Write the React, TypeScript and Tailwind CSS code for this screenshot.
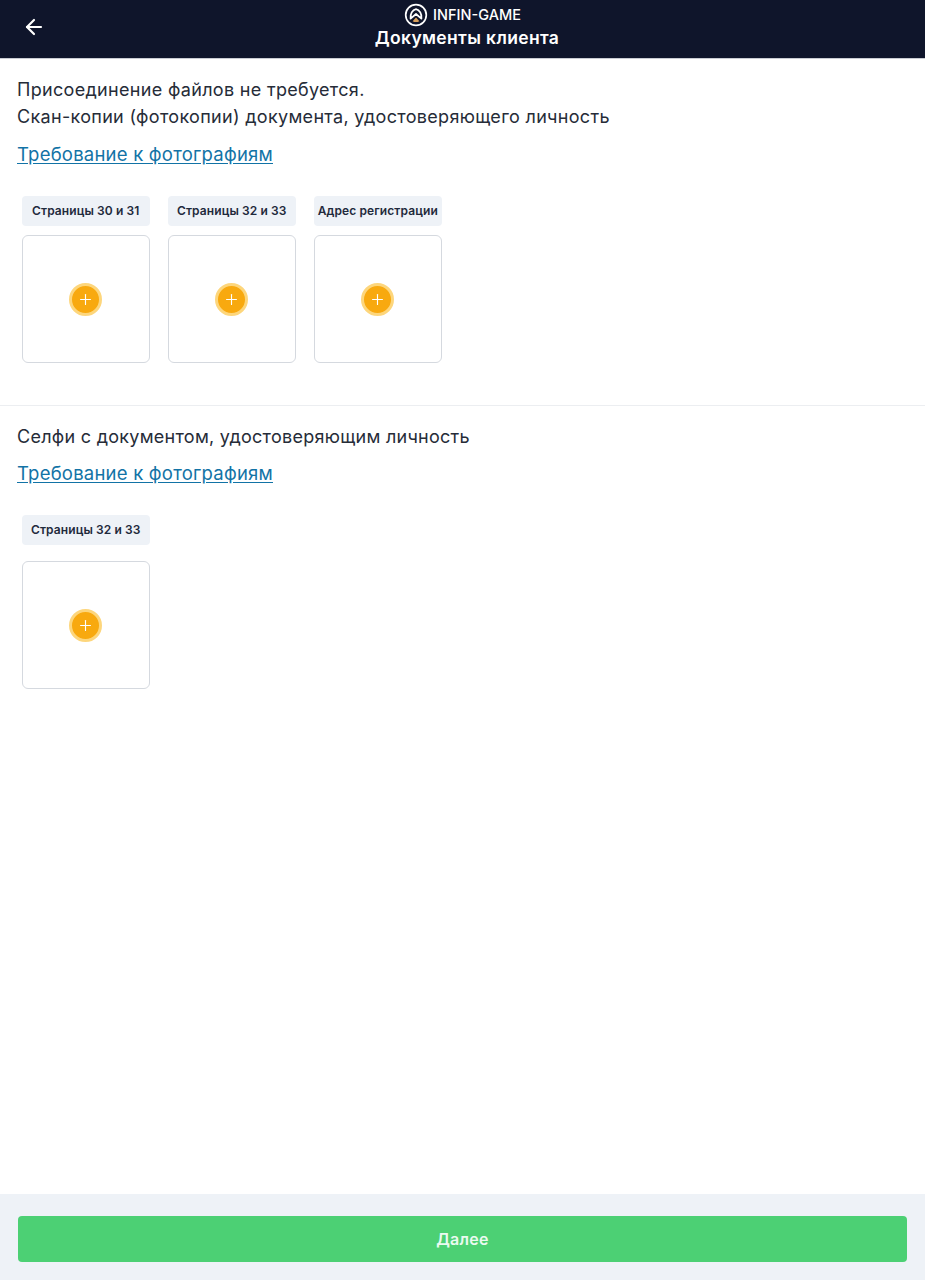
import { ArrowLeft, Plus } from 'lucide-react'

function Logo() {
  return (
    <svg width="24" height="24" viewBox="0 0 24 24" fill="none">
      <circle cx="12" cy="12" r="10.3" stroke="#fff" strokeWidth="1.7" />
      <path d="M6.6 15.6C6 11 8.4 6.8 12 6.2c3.6.6 6 4.8 5.4 9.4L12 11l-5.4 4.6Z" stroke="#fff" strokeWidth="1.8" strokeLinejoin="round" />
      <path d="M8.6 18.2 12 14.6l3.4 3.6a7.4 7.4 0 0 1-6.8 0Z" fill="#d9a05b" />
    </svg>
  )
}

function UploadSlot({ label, cardGap }: { label: string; cardGap: string }) {
  return (
    <div className={`flex w-[127.5px] flex-col ${cardGap}`}>
      <div className="flex h-[30px] items-center justify-center rounded bg-[#eef2f7] text-[12px] font-semibold tracking-[0.1px] whitespace-nowrap text-[#1f2a3c]">
        {label}
      </div>
      <div className="flex h-[128px] items-center justify-center rounded-md border border-[#d5d9df] bg-white">
        <button className="flex h-[33px] w-[33px] items-center justify-center rounded-full border-[3px] border-[#fdd67c] bg-[#f8a90f] text-white">
          <Plus size={17} strokeWidth={1.6} />
        </button>
      </div>
    </div>
  )
}

function PhotoLink() {
  return (
    <a href="#" className="text-[18.5px] leading-[26px] tracking-[0.22px] text-[#1273a6] underline underline-offset-2">
      Требование к фотографиям
    </a>
  )
}

export default function App() {
  return (
    <div className="flex min-h-[1280px] flex-col bg-white font-['Inter','Noto_Sans',sans-serif] text-[#262c38]">
      <header className="relative flex h-[59px] flex-col items-center border-b border-[#c9ccd3] bg-[#0f152b] text-white">
        <button className="absolute top-[15px] left-[22px]">
          <ArrowLeft size={24} strokeWidth={2.2} />
        </button>
        <div className="mt-[3px] flex h-[24px] items-center gap-[5px] text-[14.5px] font-medium">
          <Logo />
          INFIN-GAME
        </div>
        <h1 className="-mt-[1px] ml-[9px] text-[17.5px] leading-[24px] font-semibold tracking-[0.35px]">Документы клиента</h1>
      </header>

      <main className="flex-1">
        <section className="border-b border-[#eceef1] px-[17px] pt-[18px] pb-[42px]">
          <p className="text-[18px] leading-[26px] tracking-[0.31px]">Присоединение файлов не требуется.</p>
          <p className="text-[18px] leading-[27px] tracking-[0.31px]">Скан-копии (фотокопии) документа, удостоверяющего личность</p>
          <div className="mt-[11px]">
            <PhotoLink />
          </div>
          <div className="mt-[29px] ml-[5px] flex gap-[18.5px]">
            <UploadSlot label="Страницы 30 и 31" cardGap="gap-[9px]" />
            <UploadSlot label="Страницы 32 и 33" cardGap="gap-[9px]" />
            <UploadSlot label="Адрес регистрации" cardGap="gap-[9px]" />
          </div>
        </section>

        <section className="px-[17px] pt-[17px]">
          <p className="text-[18px] leading-[27px] tracking-[0.27px]">Селфи с документом, удостоверяющим личность</p>
          <div className="mt-[10px]">
            <PhotoLink />
          </div>
          <div className="mt-[29px] ml-[5px] flex">
            <UploadSlot label="Страницы 32 и 33" cardGap="gap-[16px]" />
          </div>
        </section>
      </main>

      <footer className="flex h-[86px] items-start bg-[#eef2f7] px-[18px] pt-[22px]">
        <button className="h-[46px] w-full rounded bg-[#4cd074] text-[16px] font-semibold tracking-[0.3px] text-[#eafaf0]">
          Далее
        </button>
      </footer>
    </div>
  )
}
